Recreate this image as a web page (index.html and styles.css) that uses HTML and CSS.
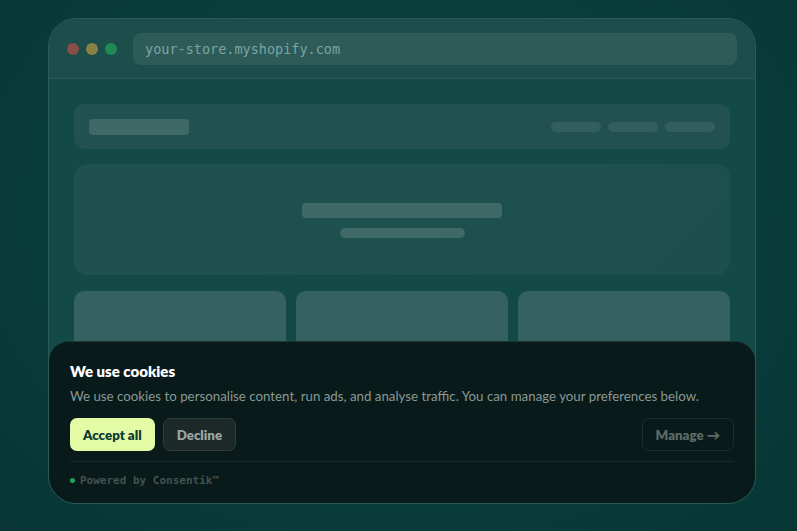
FILE: index.html
```html
<!DOCTYPE html>
<html lang="en">
<head>
    <meta charset="UTF-8">
    <meta name="viewport" content="width=device-width, initial-scale=1.0">
    <title>Cookie Banner Preview</title>
    <link rel="stylesheet" href="styles.css">
</head>
<body>
    <div class="browser">
        <div class="toolbar">
            <div class="dots">
                <span class="dot red"></span>
                <span class="dot yellow"></span>
                <span class="dot green"></span>
            </div>
            <div class="url">your-store.myshopify.com</div>
        </div>

        <div class="page">
            <div class="nav">
                <div class="logo"></div>
                <div class="links">
                    <span></span>
                    <span></span>
                    <span></span>
                </div>
            </div>
            <div class="hero">
                <div class="hero-title"></div>
                <div class="hero-sub"></div>
            </div>
            <div class="cards">
                <div class="card"></div>
                <div class="card"></div>
                <div class="card"></div>
            </div>
        </div>

        <div class="banner">
            <h3>We use cookies</h3>
            <p>We use cookies to personalise content, run ads, and analyse traffic. You can manage your preferences below.</p>
            <div class="actions">
                <button class="btn accept">Accept all</button>
                <button class="btn decline">Decline</button>
                <button class="btn manage">Manage &rarr;</button>
            </div>
            <div class="footer">
                <span class="live"></span>
                Powered by Consentik&trade;
            </div>
        </div>
    </div>
</body>
</html>
```

FILE: styles.css
```css
body {
    margin: 0;
    height: 531px;
    overflow: hidden;
    background: radial-gradient(ellipse at 50% 40%, #0d4543 0%, #083b3a 70%, #073634 100%);
    font-family: Lato, "Open Sans", sans-serif;
    padding: 18px 0 0 48px;
    box-sizing: border-box;
}

.browser {
    position: relative;
    width: 708px;
    height: 486px;
    box-sizing: border-box;
    border: 1px solid #2a5a57;
    border-radius: 28px;
    background: #134947;
    overflow: hidden;
}

.toolbar {
    height: 59px;
    display: flex;
    align-items: center;
    padding: 0 18px;
    gap: 16px;
    background: #1c4f4c;
    border-bottom: 1px solid #2c5c59;
}

.dots {
    display: flex;
    gap: 7px;
}

.dot {
    width: 12px;
    height: 12px;
    border-radius: 50%;
}

.dot.red { background: #8a4d47; }
.dot.yellow { background: #8a8245; }
.dot.green { background: #1f8a54; }

.url {
    flex: 1;
    height: 32px;
    border-radius: 8px;
    background: #2d5b58;
    display: flex;
    align-items: center;
    padding-left: 12px;
    font-family: "DejaVu Sans Mono", monospace;
    font-size: 13.5px;
    color: #7fa3a0;
}

.page {
    padding: 25px 25px 0;
    display: flex;
    flex-direction: column;
    gap: 15px;
}

.nav {
    height: 45px;
    border-radius: 10px;
    background: #215250;
    display: flex;
    align-items: center;
    justify-content: space-between;
    padding: 0 15px;
}

.logo {
    width: 100px;
    height: 16px;
    border-radius: 4px;
    background: #3f6967;
}

.links {
    display: flex;
    gap: 7px;
}

.links span {
    width: 50px;
    height: 10px;
    border-radius: 5px;
    background: #325f5d;
}

.hero {
    height: 111px;
    border-radius: 14px;
    background: linear-gradient(135deg, #1f514f, #1d4f4c);
    display: flex;
    flex-direction: column;
    align-items: center;
    padding-top: 39px;
    box-sizing: border-box;
    gap: 10px;
}

.hero-title {
    width: 200px;
    height: 15px;
    border-radius: 4px;
    background: #3f6967;
}

.hero-sub {
    width: 125px;
    height: 10px;
    border-radius: 5px;
    background: #3f6967;
}

.cards {
    display: grid;
    grid-template-columns: repeat(3, 1fr);
    gap: 10px;
    margin-top: 1px;
}

.card {
    height: 120px;
    border-radius: 10px;
    background: #356260;
}

.banner {
    position: absolute;
    left: 0;
    right: 0;
    bottom: 0;
    height: 162px;
    box-sizing: border-box;
    background: #081a19;
    border-top: 1px solid #1d3533;
    border-radius: 20px 20px 0 0;
    padding: 20px 21px 0 21px;
}

.banner h3 {
    margin: 0;
    font-size: 15px;
    font-weight: 800;
    color: #ffffff;
}

.banner p {
    margin: 8px 0 0;
    font-size: 13.3px;
    color: #8a9896;
}

.actions {
    display: flex;
    gap: 8px;
    margin-top: 14px;
}

.btn {
    height: 33px;
    border-radius: 7px;
    font-family: inherit;
    font-size: 13.3px;
    font-weight: 800;
    padding: 0 13px;
    cursor: pointer;
}

.accept {
    background: #e4fba6;
    color: #0d3b38;
    border: none;
}

.decline {
    background: #1d2928;
    border: 1px solid #2f3d3b;
    color: #9aa5a3;
}

.manage {
    margin-left: auto;
    background: transparent;
    border: 1px solid #1f2e2d;
    color: #5c6b69;
}

.footer {
    margin-top: 10px;
    border-top: 1px solid #1a2a29;
    padding-top: 12px;
    display: flex;
    align-items: center;
    gap: 5px;
    font-family: "DejaVu Sans Mono", monospace;
    font-size: 11px;
    font-weight: bold;
    color: #44524f;
}

.live {
    width: 5px;
    height: 5px;
    border-radius: 50%;
    background: #1fa35a;
}
```
